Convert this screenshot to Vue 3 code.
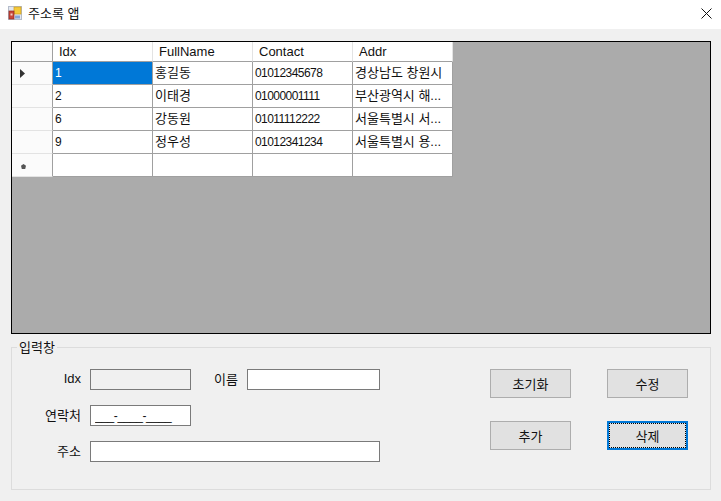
<script setup>
const columns = ['Idx', 'FullName', 'Contact', 'Addr']
const rows = [
  { idx: '1', name: '홍길동', contact: '01012345678', addr: '경상남도 창원시', current: true },
  { idx: '2', name: '이태경', contact: '01000001111', addr: '부산광역시 해...' },
  { idx: '6', name: '강동원', contact: '01011112222', addr: '서울특별시 서...' },
  { idx: '9', name: '정우성', contact: '01012341234', addr: '서울특별시 용...' },
]
</script>

<template>
  <div class="window">
    <header class="titlebar">
      <svg class="app-icon" width="14" height="14" viewBox="0 0 14 14">
        <rect x="0" y="0" width="14" height="14" fill="#e3e7ef" />
        <rect x="0.5" y="0.5" width="13" height="13" fill="none" stroke="#b4bccb" />
        <rect x="6" y="1" width="7" height="7" fill="#f4c93a" stroke="#cf9f1e" stroke-width="0.7" />
        <rect x="1" y="5" width="5" height="8" fill="#c9463a" stroke="#8f2a22" stroke-width="0.7" />
        <rect x="2.5" y="7.5" width="2" height="2" fill="#f2cfc8" />
        <rect x="7" y="9.5" width="5" height="3" fill="#86a6d6" />
      </svg>
      <span class="title">주소록 앱</span>
      <svg class="close" width="11" height="11" viewBox="0 0 11 11">
        <path d="M0.5 0.5 L10.5 10.5 M10.5 0.5 L0.5 10.5" stroke="#111" stroke-width="1" fill="none" />
      </svg>
    </header>

    <section class="gridview">
      <div class="table">
        <div class="corner"></div>
        <div v-for="c in columns" :key="c" class="colhead">{{ c }}</div>

        <template v-for="r in rows" :key="r.idx">
          <div class="rowhead">
            <svg v-if="r.current" width="5" height="9" viewBox="0 0 5 9"><path d="M0 0 L5 4.5 L0 9 Z" fill="#333" /></svg>
          </div>
          <div class="cell num" :class="{ selected: r.current }">{{ r.idx }}</div>
          <div class="cell">{{ r.name }}</div>
          <div class="cell num">{{ r.contact }}</div>
          <div class="cell">{{ r.addr }}</div>
        </template>

        <div class="rowhead newrow">
          <svg width="5" height="5" viewBox="0 0 6 6"><path d="M3 0 L6 2 L5 6 L1 6 L0 2 Z" fill="#555" /></svg>
        </div>
        <div class="cell"></div>
        <div class="cell"></div>
        <div class="cell"></div>
        <div class="cell"></div>
      </div>
    </section>

    <fieldset class="group">
      <legend>입력창</legend>
      <div class="fields">
        <label class="lbl">Idx</label>
        <input class="inp" disabled />
        <label class="lbl">이름</label>
        <input class="inp name" />
        <label class="lbl">연락처</label>
        <input class="inp phone" value="___-____-____" />
        <span></span>
        <span></span>
        <label class="lbl">주소</label>
        <input class="inp wide" />
      </div>
      <div class="actions">
        <button class="btn">초기화</button>
        <button class="btn">수정</button>
        <button class="btn">추가</button>
        <button class="btn focused">삭제</button>
      </div>
    </fieldset>
  </div>
</template>

<style scoped>
.window {
  width: 721px;
  height: 501px;
  background: #f0f0f0;
  display: flex;
  flex-direction: column;
  overflow: hidden;
  font-family: "Liberation Sans", "Noto Sans CJK KR", sans-serif;
  font-size: 13px;
  color: #111;
}
.titlebar {
  height: 29px;
  flex: none;
  background: #fff;
  display: flex;
  align-items: center;
  padding: 0 9px 3px 8px;
  box-sizing: border-box;
}
.app-icon { flex: none; }
.title { margin-left: 6px; flex: 1; line-height: 18px; padding-top: 1px; }
.close { flex: none; }

.gridview {
  margin: 12px 10px 0 11px;
  height: 293px;
  flex: none;
  box-sizing: border-box;
  border: 1px solid #000;
  background: #ababab;
}
.table {
  display: grid;
  grid-template-columns: 41px repeat(4, 100px);
  grid-template-rows: 20px repeat(5, 23px);
  width: 441px;
}
.corner, .colhead, .rowhead {
  background: #fbfbfb;
  box-sizing: border-box;
  border-right: 1px solid #e3e3e3;
  border-bottom: 1px solid #e3e3e3;
}
.corner { border-right-color: #a0a0a0; border-bottom-color: #a0a0a0; }
.colhead {
  background: #fff;
  padding-left: 6px;
  line-height: 20px;
  border-bottom-color: #a0a0a0;
}
.rowhead {
  display: flex;
  align-items: center;
  padding-left: 8px;
  border-right-color: #a0a0a0;
}
.newrow { padding-left: 9px; padding-top: 3px; }
.cell {
  background: #fff;
  box-sizing: border-box;
  border-right: 1px solid #a0a0a0;
  border-bottom: 1px solid #a0a0a0;
  padding-left: 2px;
  line-height: 21px;
  white-space: nowrap;
  overflow: hidden;
}
.cell.num { font-size: 12px; letter-spacing: -0.55px; line-height: 22px; }
.cell.selected { background: #0078d7; color: #fff; }

.group {
  margin: 5px 10px 0 11px;
  padding: 0;
  height: 151px;
  flex: none;
  box-sizing: border-box;
  border: 1px solid #dcdcdc;
  display: flex;
  min-width: 0;
}
.group legend {
  margin-left: 5px;
  padding: 0 2px;
  line-height: 17px;
}
.fields {
  margin: 13px 0 0 10px;
  display: grid;
  grid-template-columns: 59px 110px 47px 143px;
  grid-template-rows: repeat(3, 21px);
  row-gap: 15px;
  align-items: center;
}
.lbl { text-align: right; padding-bottom: 3px; }
.inp {
  box-sizing: border-box;
  height: 21px;
  width: 101px;
  margin: 0 0 0 9px;
  padding: 0 3px 0 4px;
  border: 1px solid #7a7a7a;
  background: #fff;
  font: inherit;
  color: #111;
  outline: none;
  border-radius: 0;
}
.inp:disabled { background: #f0f0f0; }
.inp.name { width: 133px; }
.inp.wide { grid-column: 2 / 5; width: 290px; }
.inp.phone { font-size: 12px; letter-spacing: -0.4px; }

.actions {
  margin: 13px 0 0 109px;
  display: grid;
  grid-template-columns: 81px 81px;
  grid-template-rows: 29px 29px;
  column-gap: 36px;
  row-gap: 23px;
}
.btn {
  box-sizing: border-box;
  margin: 0;
  padding: 0;
  border: 1px solid #adadad;
  background: #e1e1e1;
  font: inherit;
  color: #111;
  border-radius: 0;
}
.btn.focused {
  border: 2px solid #0078d7;
  outline: 1px dotted #000;
  outline-offset: -3px;
}
</style>
